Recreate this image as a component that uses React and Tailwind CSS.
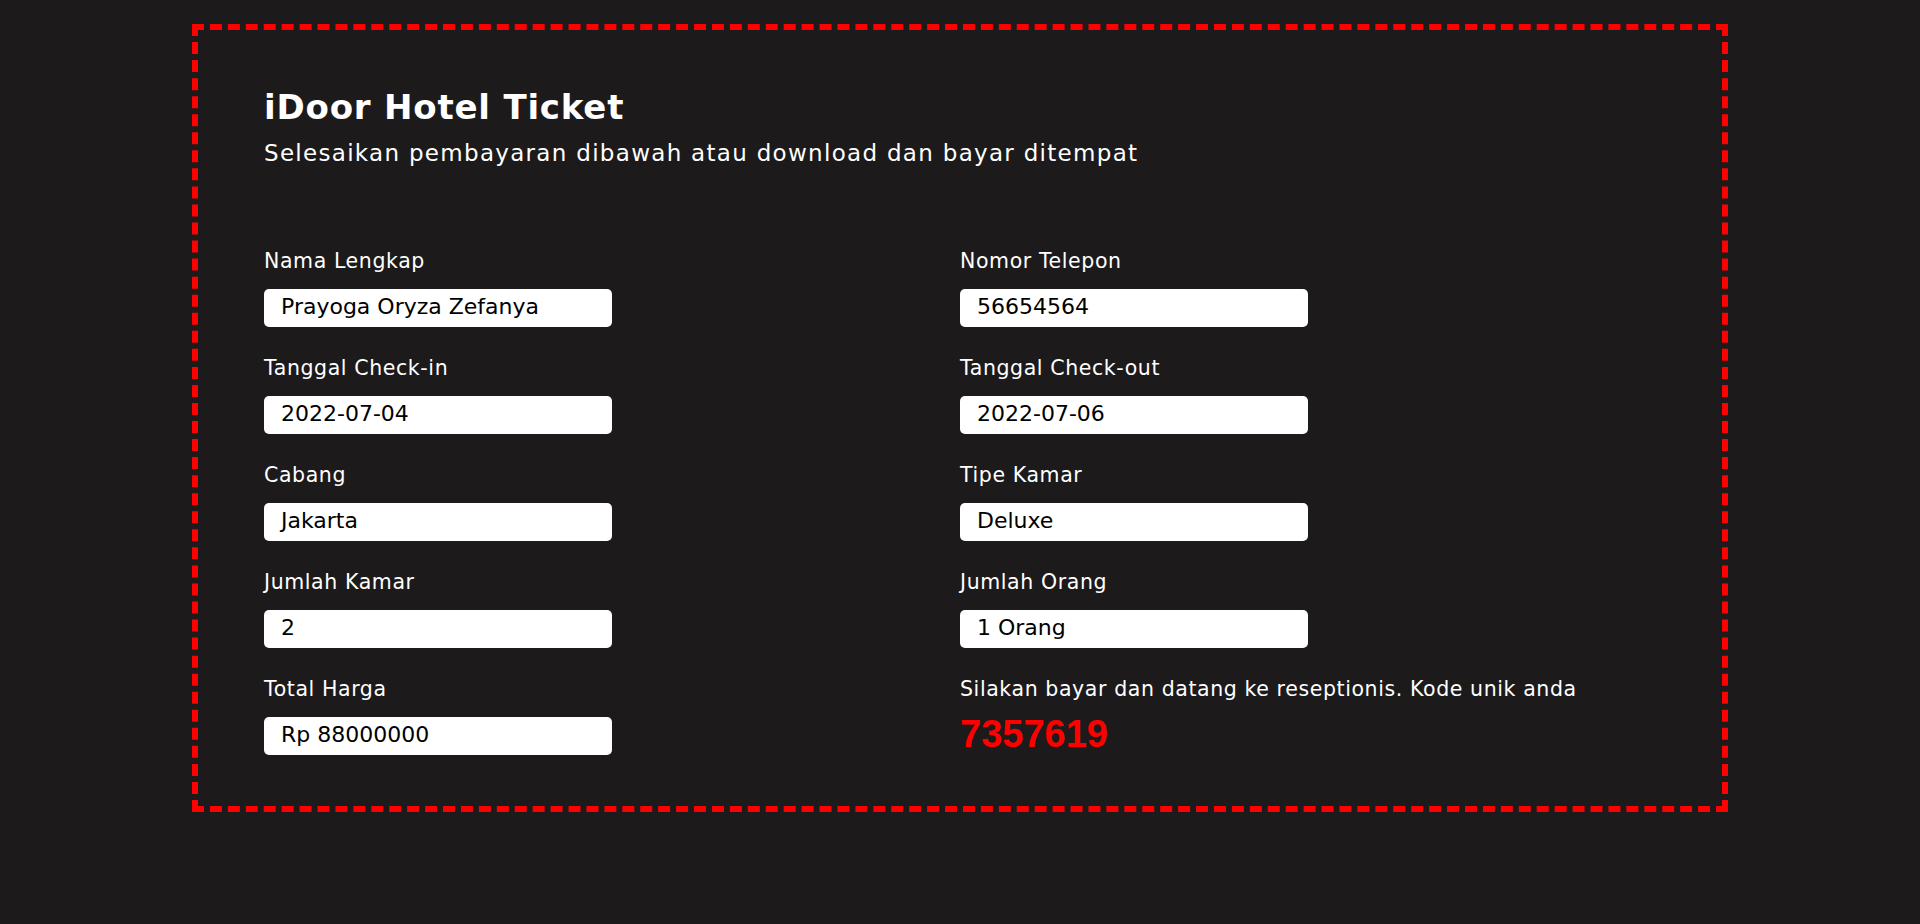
const rows = [
  ["Nama Lengkap", "Prayoga Oryza Zefanya", "Nomor Telepon", "56654564"],
  ["Tanggal Check-in", "2022-07-04", "Tanggal Check-out", "2022-07-06"],
  ["Cabang", "Jakarta", "Tipe Kamar", "Deluxe"],
  ["Jumlah Kamar", "2", "Jumlah Orang", "1 Orang"],
];

function Label({ children }) {
  return (
    <span className="block text-[20.5px] leading-[28px] tracking-[0.6px] text-white">
      {children}
    </span>
  );
}

function Field({ label, value }) {
  return (
    <div>
      <Label>{label}</Label>
      <div className="mt-[14px] h-[38px] w-[348px] rounded-[5px] bg-white pl-[17px] text-[22px] leading-[36px] text-black">
        {value}
      </div>
    </div>
  );
}

export default function App() {
  return (
    <div
      className="min-h-screen bg-[#1c1a1b] pt-6"
      style={{ fontFamily: "'DejaVu Sans', 'Noto Sans', sans-serif" }}
    >
      <div className="mx-auto w-[80%] border-[6px] border-dashed border-[#ff0000] px-[66px] pt-[57px] pb-[50px]">
        <h1 className="text-[34px] font-bold leading-[40px] tracking-[0.8px] text-white">
          iDoor Hotel Ticket
        </h1>
        <p className="mt-[9px] text-[23px] leading-[34px] tracking-[1.3px] text-white">
          Selesaikan pembayaran dibawah atau download dan bayar ditempat
        </p>

        <div className="mt-[77px] grid grid-cols-2 gap-y-[27px]">
          {rows.flatMap(([l1, v1, l2, v2]) => [
            <Field key={l1} label={l1} value={v1} />,
            <Field key={l2} label={l2} value={v2} />,
          ])}
          <Field label="Total Harga" value="Rp 88000000" />
          <div>
            <Label>Silakan bayar dan datang ke reseptionis. Kode unik anda</Label>
            <span
              className="mt-[9px] block text-[38px] font-bold leading-[44px] text-[#ff0000]"
              style={{ fontFamily: "'Liberation Sans', Arial, sans-serif" }}
            >
              7357619
            </span>
          </div>
        </div>
      </div>
    </div>
  );
}
